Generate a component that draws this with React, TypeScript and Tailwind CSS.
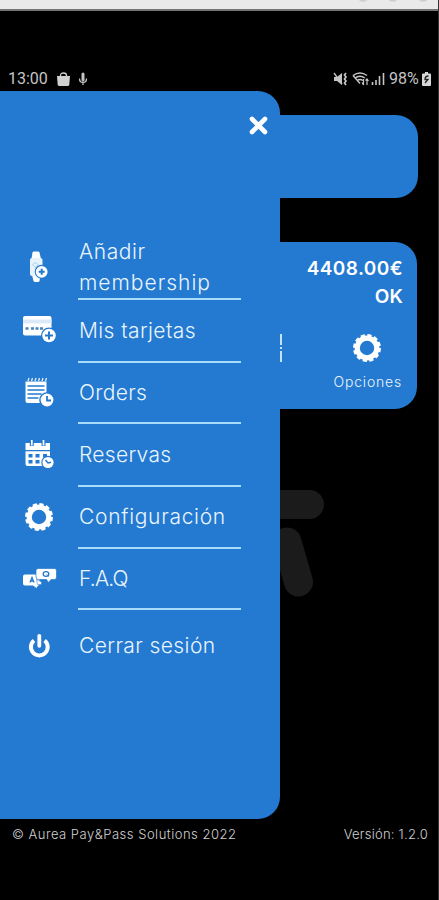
import type { ReactNode } from "react";

const BLUE = "#2479d0";

function Gear() {
  return (
    <svg width="36" height="32" viewBox="0 0 36 32" fill="none" stroke="#fff">
      <circle cx="18" cy="16" r="9.8" strokeWidth="5.200" />
      <circle cx="18" cy="16" r="12.6" strokeWidth="2.8" strokeDasharray="4.1 2.497" />
    </svg>
  );
}

function Watch() {
  return (
    <svg width="36" height="32" viewBox="0 0 36 32">
      <path d="M11.500 1.500q.3-1 1.500-1h4q1.200 0 1.500 1l1.500 6.500h-9.500z" fill="#fff" />
      <path d="M11 24h8.500l-1 6q-.3 1-1.500 1h-3q-1.200 0-1.500-1z" fill="#fff" />
      <rect x="9" y="7" width="12.500" height="18" rx="2" fill="#e9f3fc" />
      <path d="M11.500 13.500l3-2 2.500 2-2.500 3z" stroke="#a9cdee" fill="none" />
      <circle cx="20.700" cy="20.800" r="7" fill={BLUE} />
      <circle cx="20.700" cy="20.800" r="5.900" fill="#fff" />
      <path d="M20.700 17.800v6M17.700 20.800h6" stroke={BLUE} strokeWidth="2" />
    </svg>
  );
}

function CardPlus() {
  return (
    <svg width="36" height="32" viewBox="0 0 36 32">
      <rect x="2" y="3" width="28.500" height="19.500" rx="2" fill="#fff" />
      <path d="M2 6.500h28.500v4H2z" fill="#dceaf8" />
      <path d="M4.500 15.500h3M10 15.500h3M14.500 15.500h3M19 15.500h3" stroke="#4a83ba" strokeWidth="2.500" />
      <circle cx="28" cy="22.500" r="8" fill={BLUE} />
      <circle cx="28" cy="22.500" r="6.800" fill="#fff" />
      <path d="M28 18.500v8M24 22.500h8" stroke={BLUE} strokeWidth="2" />
    </svg>
  );
}

function Orders() {
  return (
    <svg width="36" height="32" viewBox="0 0 36 32">
      <path d="M4.500 6.500h21v21.500h-19q-2 0-2-2z" fill="#fff" />
      <path d="M7 6l1-3M10.500 6l1-3M14 6l1-3M17.500 6l1-3M21 6l1-3M24.500 6l1-3" stroke="#e4f0fb" strokeWidth="1.300" />
      <path d="M6.500 11h17M6.500 15h17M6.500 19h14M6.500 23h11" stroke={BLUE} strokeWidth="1.300" />
      <circle cx="26" cy="25" r="7.800" fill={BLUE} />
      <circle cx="26" cy="25" r="6.400" fill="#fff" />
      <path d="M26 21v4.500h4" stroke={BLUE} strokeWidth="1.800" fill="none" />
    </svg>
  );
}

function Calendar() {
  return (
    <svg width="36" height="32" viewBox="0 0 36 32">
      <path d="M4.500 5h24.500v7H4.500zM4.500 13.300h24.500V28H6.500q-2 0-2-2z" fill="#fff" />
      <path d="M10.800 2v6M22.500 2v6" stroke={BLUE} strokeWidth="4" />
      <path d="M10.800 2v5.500M22.500 2v5.500" stroke="#fff" strokeWidth="1.700" />
      <path d="M7.500 16h4v3.500h-4zM14.500 16h4v3.500h-4zM22 16h4v3.500h-4zM7.500 22h4v3.500h-4zM14.500 22h4v3.500h-4z" fill={BLUE} />
      <circle cx="27" cy="24.500" r="6.700" fill={BLUE} />
      <circle cx="27" cy="24.500" r="5.600" fill="#fff" />
      <path d="M24.500 22l2.500 3 3-.8" stroke={BLUE} strokeWidth="1.500" fill="none" />
    </svg>
  );
}

function Faq() {
  return (
    <svg width="36" height="32" viewBox="0 0 36 32">
      <path d="M4 12.500h13q1.500 0 1.500 1.500v8q0 1.500-1.500 1.500l-1.500 2.500-3.500-2.500H4q-2 0-2-2v-7q0-2 2-2z" fill="#fff" />
      <path d="M9 20.500l2-5 2 5M9.500 19h3" stroke={BLUE} strokeWidth="1.300" fill="none" />
      <path d="M17.500 6.500h16q2 0 2 2V15q0 2.500-2 2.500H30l-2.500 3-2-3h-8q-2.500 0-2.500-2.500V8.500q0-2 2.500-2z" fill="#fff" stroke={BLUE} strokeWidth=".7" />
      <ellipse cx="25" cy="12" rx="2.800" ry="2.300" stroke={BLUE} strokeWidth="1.300" fill="none" />
      <path d="M25.500 12.500l2.500 2" stroke={BLUE} strokeWidth=".8" />
      <path d="M15.500 17.500l5 2.500v2.500h-4z" stroke={BLUE} fill="#fff" strokeWidth=".5" />
    </svg>
  );
}

function Power() {
  return (
    <svg width="36" height="32" viewBox="0 0 36 32" fill="none" stroke="#fff" strokeWidth="4">
      <path d="M13 11.500a8.400 8.400 0 1 0 10.600 0" />
      <path d="M18.300 6.800v10" strokeWidth="3.800" strokeLinecap="round" />
    </svg>
  );
}

const items: { label: ReactNode; icon: ReactNode; row: string; text: string; pad: string }[] = [
  {
    label: (
      <>
        Añadir
        <br />
        <span className="tracking-[1px]">membership</span>
      </>
    ),
    icon: <Watch />,
    row: "h-16",
    text: "tracking-[0.6px]",
    pad: "pb-[2px]",
  },
  { label: "Mis tarjetas", icon: <CardPlus />, row: "h-[63px]", text: "tracking-[0.4px] pb-px", pad: "pb-[5px]" },
  { label: "Orders", icon: <Orders />, row: "h-[61px]", text: "tracking-[0.3px] pb-px", pad: "pb-[5px]" },
  { label: "Reservas", icon: <Calendar />, row: "h-[63px]", text: "tracking-[0.3px] pb-px", pad: "pb-[3px]" },
  { label: "Configuración", icon: <Gear />, row: "h-[62px]", text: "tracking-[0.7px] pb-px", pad: "pb-[3px]" },
  { label: "F.A.Q", icon: <Faq />, row: "h-[61px]", text: "tracking-[-0.8px]", pad: "pb-[3px]" },
  { label: "Cerrar sesión", icon: <Power />, row: "h-[71px]", text: "tracking-[0.4px]", pad: "pb-[1px]" },
];

function Drawer() {
  return (
    <aside className="absolute left-0 top-[91px] h-[728px] w-[280px] rounded-r-[22px] bg-[#2479d0]">
      <div className="flex h-[145px] items-start justify-end pr-[12px] pt-[25px]">
        <svg width="19" height="19" viewBox="0 0 19 19" stroke="#fff" strokeWidth="4.600" strokeLinecap="round">
          <path d="M3 3l13 13M16 3L3 16" />
        </svg>
      </div>
      <nav>
        {items.map((it, i) => (
          <div key={i} className={`flex pl-[21px] ${it.row}`}>
            <div className={`flex w-[57px] items-center ${it.pad}`}>{it.icon}</div>
            <div
              className={`flex w-[163px] items-center whitespace-nowrap pl-px text-[21px] font-light leading-[31px] text-[#e9f5ff] ${it.text} ${
                i < items.length - 1 ? "border-b-2 border-[#a9dcfb]" : ""
              }`}
            >
              <span>{it.label}</span>
            </div>
          </div>
        ))}
      </nav>
    </aside>
  );
}

function StatusBar() {
  return (
    <div className="flex h-[24px] items-center justify-between pl-[8px] pr-[7px] font-[Roboto,sans-serif] text-[16px] text-[#c4c4c4]">
      <div className="flex items-center">
        <span className="w-[49px]">13:00</span>
        <svg width="13" height="15" viewBox="0 0 13 15" fill="#d0d0d0">
          <path d="M3.500 4.500V3.500q0-2.500 3-2.500t3 2.500v1" fill="none" stroke="#d0d0d0" strokeWidth="1.300" />
          <path d="M0 4h13l-.7 8.500q-.2 1.500-1.500 1.500H2.200Q.9 14 .7 12.500z" />
        </svg>
        <svg className="ml-[8px]" width="10" height="14" viewBox="0 0 10 14" fill="none" stroke="#c4c4c4">
          <path d="M5 2v6" strokeWidth="3" strokeLinecap="round" />
          <path d="M1.500 6.500q0 4 3.500 4t3.500-4M5 10v3" strokeWidth="1.300" />
        </svg>
      </div>
      <div className="flex items-center">
        <svg width="53" height="16" viewBox="0 0 53 16" fill="none" stroke="#c4c4c4">
          <path d="M1 6h3l5-4v12l-5-4H1z" fill="#c4c4c4" stroke="none" />
          <path d="M1 2l8 11" strokeWidth="1.300" />
          <path d="M13 2l-1.500 2L13 6l-1.500 2 1.500 2-1.500 2 1.500 2" strokeWidth="1.700" />
          <path d="M20 4.500q7-5 14 0M22 7q5-3.500 10 0M24 9.500q3-2 6 0M20 4.500l7 8" strokeWidth="1.400" />
          <path d="M30.500 8v6M34 8v6M29 11.500l1.500 2.500M32.500 9.500L34 8l1.500 2" strokeWidth="1.200" />
          <path d="M39.500 11v3M43 9v5M46.500 5v9M50.500 2v12" strokeWidth="1.600" />
        </svg>
        <span className="ml-[3px] w-[33px]">98%</span>
        <svg width="9" height="14" viewBox="0 0 9 14">
          <path d="M3 0h3v1.500h2q1 0 1 1V13q0 1-1 1H1q-1 0-1-1V2.500q0-1 1-1h2z" fill="#d8d8d8" />
          <path d="M6.500 4Q3 4 3 7.500h3L3 11" fill="none" stroke="#222" strokeWidth="1.300" />
        </svg>
      </div>
    </div>
  );
}

export default function App() {
  return (
    <div className="relative flex h-[900px] w-[439px] flex-col overflow-hidden border-r border-[#333] bg-black font-[Inter,sans-serif]">
      <div className="flex h-[11px] shrink-0 justify-end gap-[20px] overflow-hidden border-b-2 border-[#747474] bg-[#e9e9e9] pr-[10px]">
        <i className="-mt-[8px] h-[10px] w-[10px] rounded-full bg-[#cfcfcf]" />
        <i className="-mt-[8px] h-[10px] w-[10px] rounded-full bg-[#cfcfcf]" />
        <i className="-mt-[8px] h-[10px] w-[10px] rounded-full bg-[#cfcfcf]" />
      </div>
      <div className="mt-[56px]">
        <StatusBar />
      </div>
      <main className="flex flex-col pl-[20px]">
        <section className="mt-[24px] h-[83px] w-[398px] rounded-[22px] bg-[#2479d0]" />
        <section className="mt-[44px] flex h-[167px] w-[397px] flex-col items-end rounded-[22px] bg-[#2479d0] pr-[14px] pt-[12px] text-white">
          <div className="text-[19px] font-semibold leading-[29px] tracking-[0.4px]">4408.00€</div>
          <div className="text-[19px] font-semibold leading-[28px] tracking-[0.2px]">OK</div>
          <div className="mt-[21px] flex w-full items-center justify-between pl-[259px] pr-[4px]">
            <svg width="3" height="28" viewBox="0 0 3 28" stroke="#c5e2fb" strokeWidth="2">
              <path d="M2 0v11M2 13v2M2 17v11" />
            </svg>
            <div className="mr-[14px]">
              <Gear />
            </div>
          </div>
          <div className="mr-px mt-[8px] text-[14px] font-light leading-[20px] tracking-[0.8px] text-[#e9f5ff]">Opciones</div>
        </section>
        <svg className="ml-[220px] mt-[76px]" width="100" height="120" viewBox="0 0 100 120" fill="none" stroke="#1b1b1b" strokeLinecap="round">
          <path d="M10 19.500h59.500" strokeWidth="29" />
          <path d="M47 57l11.500 40" strokeWidth="29" />
        </svg>
      </main>
      <footer className="mt-auto mb-[55px] flex h-[20px] items-center justify-between pl-[12px] pr-[10px] text-[13px] font-light text-[#d0d0d0]">
        <span className="tracking-[0.5px]">© Aurea Pay&amp;Pass Solutions 2022</span>
        <span className="tracking-[0.25px]">Versión: 1.2.0</span>
      </footer>
      <Drawer />
    </div>
  );
}
